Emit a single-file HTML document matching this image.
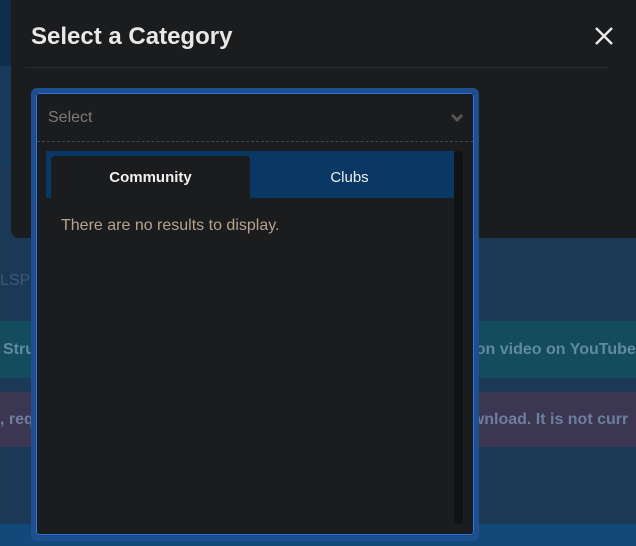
<!DOCTYPE html>
<html><head><style>
*{margin:0;padding:0;box-sizing:border-box}
body{width:636px;height:546px;overflow:hidden;background:#1b3956;font-family:"Liberation Sans",Arial,sans-serif;position:relative}
.abs{position:absolute}
</style></head><body>
<div class="abs" style="left:0;top:0;width:636px;height:66px;background:#0f2e4c"></div>
<div class="abs" style="left:0;top:66px;width:636px;height:100px;background:#163a5c"></div>
<div class="abs" style="left:0;top:272px;font-size:16px;color:#3e5870">LSPD</div>
<div class="abs" style="left:0;top:321px;width:636px;height:57px;background:#144c5e"></div>
<div class="abs" style="left:3px;top:341px;font-size:16px;font-weight:bold;color:#5f8aa0">Stru</div>
<div class="abs" style="left:466px;top:341px;font-size:16px;font-weight:bold;color:#5f8aa0;white-space:nowrap">tion video on YouTube</div>
<div class="abs" style="left:0;top:392px;width:636px;height:55px;background:#3b3753"></div>
<div class="abs" style="left:0;top:411px;font-size:16px;font-weight:bold;color:#6d7f9c">, requ</div>
<div class="abs" style="left:462px;top:411px;font-size:16px;font-weight:bold;color:#6d7f9c;white-space:nowrap">ownload. It is not curr</div>
<div class="abs" style="left:0;top:524px;width:636px;height:22px;background:#114a7a"></div>

<div class="abs" style="left:11px;top:-10px;width:640px;height:248px;background:#1b1c1e;border-radius:8px"></div>
<div class="abs" style="left:31px;top:23px;font-size:24px;font-weight:bold;color:#e8e8e8">Select a Category</div>
<div class="abs" style="left:25px;top:67px;width:583px;height:1px;background:#2a2b2e"></div>
<svg class="abs" style="left:594px;top:26px" width="20" height="20" viewBox="0 0 20 20"><path d="M2 2L18 18M18 2L2 18" stroke="#e8e8e8" stroke-width="2.4"/></svg>

<div class="abs" style="left:31px;top:88px;width:448px;height:453px;border:5px solid #1e4f8f;border-radius:6px"></div>
<div class="abs" style="left:36px;top:93px;width:438px;height:442px;border:1px solid #2f72e6;border-radius:3px;background:#1b1c1e"></div>
<div class="abs" style="left:48px;top:109px;font-size:16px;color:#7a7a7a">Select</div>
<svg class="abs" style="left:450px;top:113px" width="14" height="10" viewBox="0 0 14 10"><path d="M2 2L7 7L12 2" stroke="#555" stroke-width="3" fill="none"/></svg>
<div class="abs" style="left:37px;top:141px;width:436px;height:0;border-top:1px dashed #444"></div>
<div class="abs" style="left:46px;top:151px;width:408px;height:47px;background:#0a3864"></div>
<div class="abs" style="left:51px;top:156px;width:199px;height:42px;background:#1b1c1e;border-radius:4px 4px 0 0"></div>
<div class="abs" style="left:51px;top:169px;width:199px;text-align:center;font-size:15px;font-weight:bold;color:#f0f0f0">Community</div>
<div class="abs" style="left:250px;top:169px;width:199px;text-align:center;font-size:15px;color:#f0f0f0">Clubs</div>
<div class="abs" style="left:454px;top:151px;width:9px;height:373px;background:#111213;border-radius:4px"></div>
<div class="abs" style="left:61px;top:217px;font-size:16px;color:#b5a38c">There are no results to display.</div>
</body></html>
